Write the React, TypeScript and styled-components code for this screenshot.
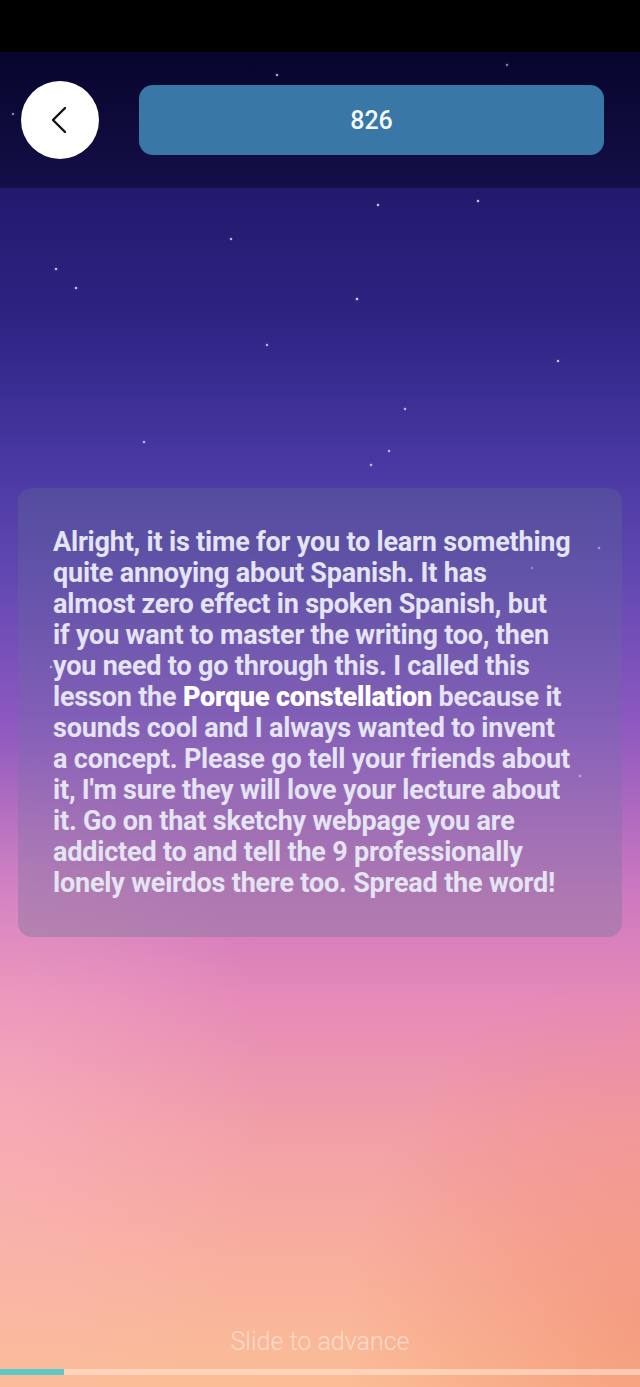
import styled, { createGlobalStyle } from 'styled-components'

const GlobalStyle = createGlobalStyle`
  html, body {
    margin: 0;
    padding: 0;
    background: #000;
  }
  #root {
    width: 640px;
    height: 1387px;
  }
`

const STARS: Array<[number, number, number]> = [
  [276, 74, 0.8],
  [506, 64, 0.6],
  [12, 113, 0.6],
  [377, 204, 0.9],
  [477, 200, 0.9],
  [230, 238, 0.8],
  [55, 268, 0.9],
  [75, 287, 0.9],
  [356, 298, 1],
  [266, 344, 0.8],
  [557, 360, 0.9],
  [404, 408, 0.8],
  [143, 441, 0.8],
  [388, 450, 0.8],
  [370, 464, 0.8],
  [598, 547, 0.5],
  [531, 567, 0.4],
  [50, 666, 0.6],
  [579, 775, 0.5],
]

// the lesson text, one entry per line as the card wraps it
const LINES: Array<Array<string | { bold: string }>> = [
  ['Alright, it is time for you to learn something'],
  ['quite annoying about Spanish. It has'],
  ['almost zero effect in spoken Spanish, but'],
  ['if you want to master the writing too, then'],
  ['you need to go through this. I called this'],
  ['lesson the ', { bold: 'Porque constellation' }, ' because it'],
  ['sounds cool and I always wanted to invent'],
  ['a concept. Please go tell your friends about'],
  ["it, I'm sure they will love your lecture about"],
  ['it. Go on that sketchy webpage you are'],
  ['addicted to and tell the 9 professionally'],
  ['lonely weirdos there too. Spread the word!'],
]

const Screen = styled.div`
  position: relative;
  width: 640px;
  height: 1387px;
  display: flex;
  flex-direction: column;
  overflow: hidden;
  font-family: Roboto, 'Liberation Sans', sans-serif;
  background:
    radial-gradient(ellipse 380px 520px at 0% 80%, rgba(255, 195, 205, 0.35), transparent 70%),
    radial-gradient(ellipse 420px 520px at 100% 96%, rgba(238, 118, 92, 0.4), transparent 70%),
    linear-gradient(
      180deg,
      #1c1763 0px,
      #221a6e 190px,
      #2d2483 320px,
      #4636a0 450px,
      #5e46b0 560px,
      #8c58c0 720px,
      #cf7ac0 900px,
      #e68ab8 1000px,
      #f29fa8 1130px,
      #f8ae9e 1250px,
      #fbbd96 1387px
    );
`

const Star = styled.span`
  position: absolute;
  width: 2px;
  height: 2px;
  border-radius: 50%;
  background: #fff;
  box-shadow: 0 0 2px rgba(255, 255, 255, 0.8);
`

const StatusBar = styled.div`
  height: 52px;
  background: #000;
  flex-shrink: 0;
`

const Header = styled.div`
  height: 136px;
  flex-shrink: 0;
  display: flex;
  align-items: center;
  padding: 0 36px 0 21px;
  gap: 40px;
  box-sizing: border-box;
  background: linear-gradient(180deg, #07052e 0%, #0f0b3c 60%, #150f4a 100%);
`

const BackButton = styled.button`
  width: 78px;
  height: 78px;
  border-radius: 50%;
  border: none;
  background: #fff;
  display: flex;
  align-items: center;
  justify-content: center;
  padding: 0;
  flex-shrink: 0;
`

const CounterBar = styled.div`
  flex: 1;
  height: 70px;
  border-radius: 14px;
  background: #3978a6;
  display: flex;
  align-items: center;
  justify-content: center;
  color: #f4f6fa;
  font-size: 25px;
  font-weight: 500;
`

const Main = styled.div`
  flex: 1;
  display: flex;
  flex-direction: column;
  padding: 300px 18px 0;
`

const Card = styled.div`
  height: 449px;
  box-sizing: border-box;
  border-radius: 14px;
  padding: 39px 16px 0 35px;
  background: linear-gradient(
    180deg,
    rgba(90, 95, 150, 0.45) 0%,
    rgba(120, 110, 170, 0.35) 60%,
    rgba(140, 120, 160, 0.5) 100%
  );
`

const Body = styled.p`
  margin: 0;
  color: #e4e4f2;
  font-size: 27px;
  line-height: 31px;
  font-weight: 700;
  letter-spacing: -0.2px;
`

const Line = styled.span`
  display: block;
  white-space: nowrap;
`

const Strong = styled.b`
  font-weight: 900;
  color: #fff;
`

const Footer = styled.div`
  display: flex;
  flex-direction: column;
  align-items: center;
  padding-bottom: 12px;
`

const Hint = styled.div`
  color: rgba(255, 242, 232, 0.65);
  font-size: 25px;
  font-weight: 300;
  line-height: 30px;
  margin-bottom: 12px;
`

const Track = styled.div`
  align-self: stretch;
  height: 6px;
  background: rgba(255, 228, 210, 0.6);
`

const Fill = styled.div`
  height: 100%;
  background: #5fc6c6;
`

export default function App() {
  const progress = 10
  return (
    <Screen>
      <GlobalStyle />
      <StatusBar />
      <Header>
        <BackButton aria-label="Back">
          <svg width="40" height="40" viewBox="0 0 40 40" fill="none">
            <path d="M25 8 L13 20 L25 32" stroke="#111" strokeWidth="2.4" strokeLinecap="round" strokeLinejoin="round" />
          </svg>
        </BackButton>
        <CounterBar>826</CounterBar>
      </Header>
      <Main>
        <Card>
          <Body>
            {LINES.map((parts, i) => (
              <Line key={i}>
                {parts.map((p, j) =>
                  typeof p === 'string' ? p : <Strong key={j}>{p.bold}</Strong>
                )}
              </Line>
            ))}
          </Body>
        </Card>
      </Main>
      <Footer>
        <Hint>Slide to advance</Hint>
        <Track>
          <Fill style={{ width: `${progress}%` }} />
        </Track>
      </Footer>
      {STARS.map(([x, y, o], i) => (
        <Star key={i} style={{ left: x, top: y, opacity: o }} />
      ))}
    </Screen>
  )
}
